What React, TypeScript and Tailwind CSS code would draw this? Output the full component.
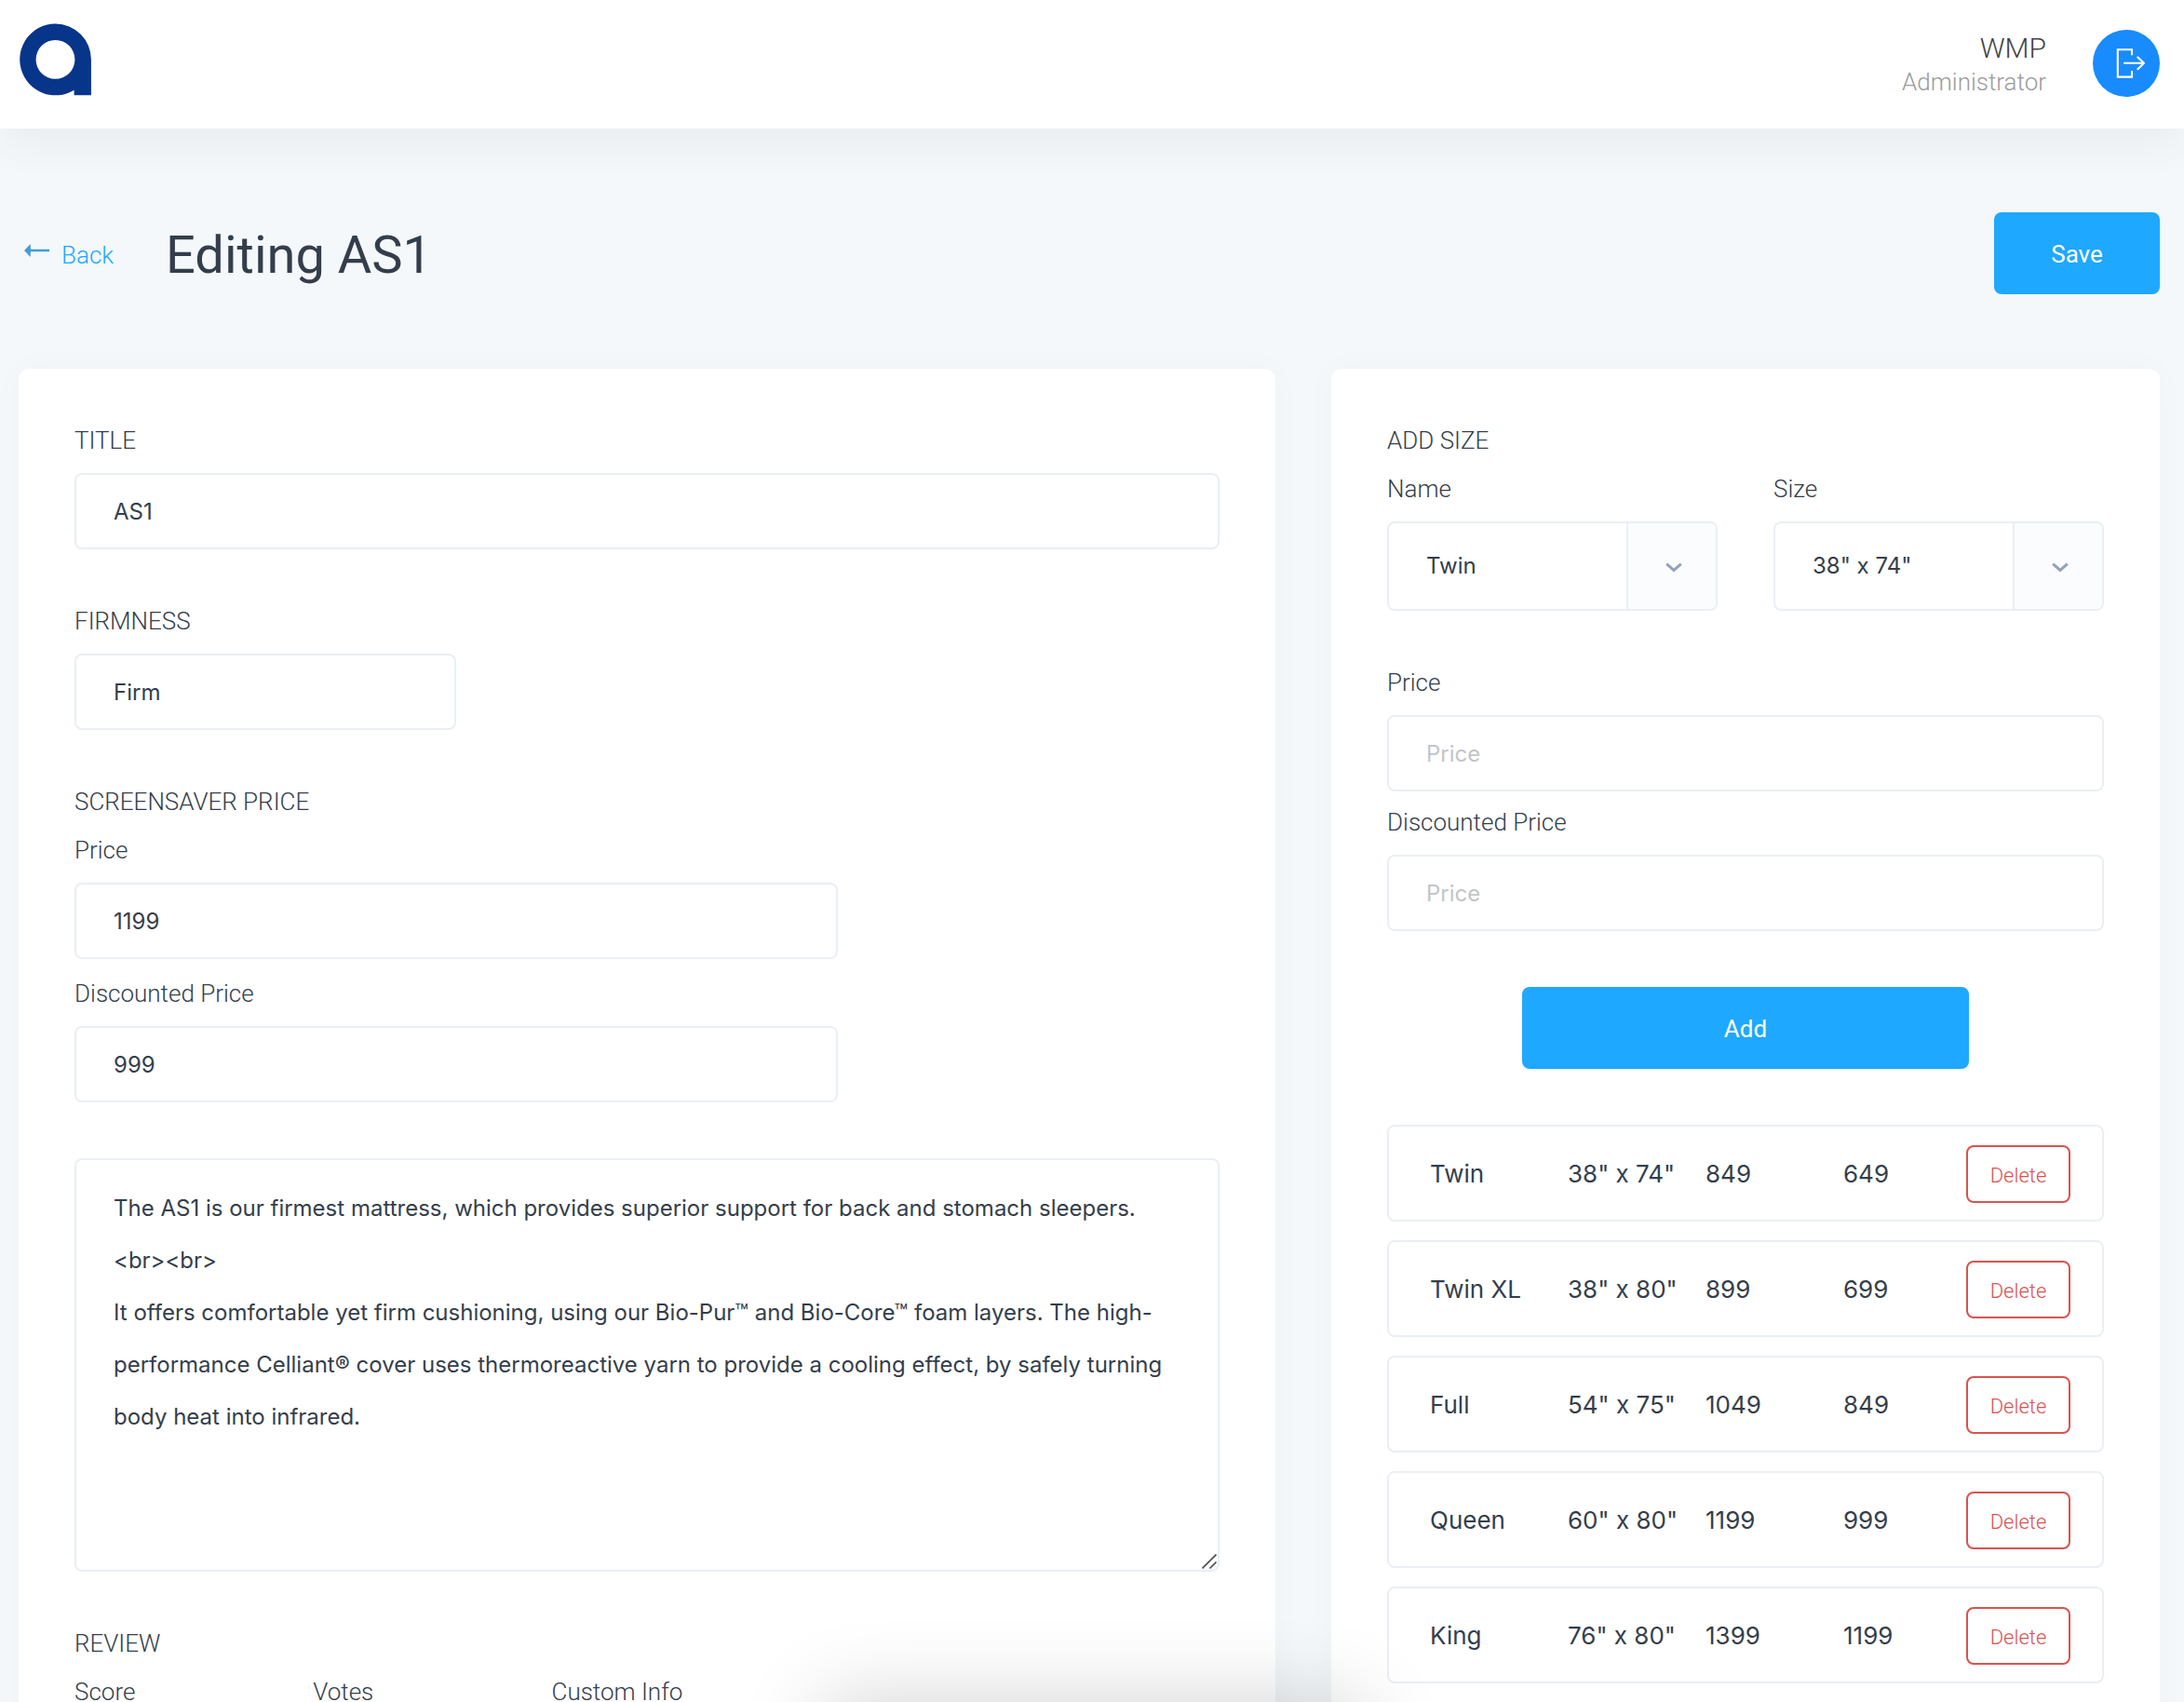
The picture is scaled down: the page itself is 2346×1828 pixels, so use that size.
import { useState } from "react";
import type { ReactNode } from "react";

const sizes = [
  { name: "Twin", size: '38" x 74"', price: "849", discounted: "649" },
  { name: "Twin XL", size: '38" x 80"', price: "899", discounted: "699" },
  { name: "Full", size: '54" x 75"', price: "1049", discounted: "849" },
  { name: "Queen", size: '60" x 80"', price: "1199", discounted: "999" },
  { name: "King", size: '76" x 80"', price: "1399", discounted: "1199" },
];

const description = `The AS1 is our firmest mattress, which provides superior support for back and stomach sleepers.
<br><br>
It offers comfortable yet firm cushioning, using our Bio-Pur™ and Bio-Core™ foam layers. The high-performance Celliant® cover uses thermoreactive yarn to provide a cooling effect, by safely turning body heat into infrared.`;

function Logo() {
  return (
    <svg viewBox="0 0 77 78" className="mb-2.5 h-[78px] w-[77px]" role="img" aria-label="Logo">
      <path
        fill="#07358a"
        fillRule="evenodd"
        d="M38.5 0.5A38.4 38.4 0 0 1 76.9 39V77.3H58.6V71.7A38.4 38.4 0 1 1 38.5 0.5ZM38.5 18A20.9 20.9 0 1 0 38.5 59.8A20.9 20.9 0 1 0 38.5 18Z"
      />
    </svg>
  );
}

function LogoutIcon() {
  return (
    <svg viewBox="0 0 40 40" className="h-10 w-10" fill="none" stroke="#fff" strokeWidth="2.1" strokeLinecap="round" aria-hidden="true">
      <path d="M26 10.5V5.2H10.8V34.6H26V29" />
      <path d="M18 19.8H38.8M32.4 13.4L39 19.8L32.4 26.2" />
    </svg>
  );
}

function BackArrow() {
  return (
    <svg viewBox="0 0 27 14" className="mb-2.5 h-3.5 w-[27px]" aria-hidden="true">
      <path fill="#419bd9" d="M0 7L6.8 0V5.8H27V8.3H6.8V14Z" />
    </svg>
  );
}

function Label({ htmlFor, children }: { htmlFor: string; children: ReactNode }) {
  return (
    <label htmlFor={htmlFor} className="block pt-0.5 text-[26px] leading-[50px] font-light">
      {children}
    </label>
  );
}

function TextInput({ id, value, placeholder }: { id: string; value?: string; placeholder?: string }) {
  return (
    <input
      id={id}
      type="text"
      defaultValue={value}
      placeholder={placeholder}
      className="mt-2.5 block h-[82px] w-full rounded-lg border-2 border-[#e9eff5] bg-white px-10 font-[Inter,sans-serif] text-2xl outline-none placeholder:text-[#c3c5c8]"
    />
  );
}

function SelectInput({ id, options }: { id: string; options: string[] }) {
  const [value, setValue] = useState(options[0]);
  return (
    <div className="relative mt-2.5">
      <select
        id={id}
        value={value}
        onChange={(e) => setValue(e.target.value)}
        className="block h-24 w-full appearance-none rounded-lg border-2 border-[#e9eff5] bg-white pr-28 pl-10 font-[Inter,sans-serif] text-2xl outline-none"
      >
        {options.map((o) => (
          <option key={o}>{o}</option>
        ))}
      </select>
      <span className="pointer-events-none absolute inset-y-0.5 right-0.5 flex w-24 items-center justify-center rounded-r-md border-l-2 border-[#e9eff5] bg-[#fafcfe] pt-0.5 pl-1">
        <svg viewBox="0 0 18 11" className="h-[11px] w-[18px]" fill="none" stroke="#94a3ba" strokeWidth="3" aria-hidden="true">
          <path d="M1.2 1.6L9 8.4L16.8 1.6" />
        </svg>
      </span>
    </div>
  );
}

export default function App() {
  return (
    <div className="relative h-screen overflow-hidden bg-[#f4f8fa] font-[Roboto,sans-serif] text-[#343e4b]">
      <header className="relative flex h-[138px] items-center justify-between bg-white pr-[26px] pl-[21px] shadow-[0_20px_40px_rgba(0,0,0,0.043)]">
        <Logo />
        <div className="flex items-center gap-[50px]">
          <div className="pt-0.5 text-right font-light">
            <p className="text-3xl leading-9 text-[#454545]">WMP</p>
            <p className="text-[26px] leading-9 text-[#9b9b9b]">Administrator</p>
          </div>
          <button type="button" aria-label="Log out" className="mb-0.5 flex h-[72px] w-[72px] items-center justify-center rounded-full bg-[#188bff]">
            <LogoutIcon />
          </button>
        </div>
      </header>

      <main className="pt-[90px] pr-[26px] pl-5">
        <div className="flex items-center justify-between">
          <div className="flex items-center gap-14 pt-1 pl-1.5">
            <a href="#back" className="flex items-center gap-[13px] text-[26px] leading-9 font-light text-[#1fa8ff]">
              <BackArrow />
              Back
            </a>
            <h1 className="text-[56px] leading-[72px]">Editing AS1</h1>
          </div>
          <button type="button" className="h-[88px] w-[178px] rounded-lg bg-[#1fa8ff] pt-0.5 text-[26px] text-white">
            Save
          </button>
        </div>

        <div className="mt-20 grid grid-cols-[135fr_89fr] items-start gap-[60px]">
          <section className="min-h-[1600px] rounded-xl bg-white px-[60px] py-[50px] shadow-[0_0_40px_rgba(0,0,0,0.025)]">
            <div>
              <Label htmlFor="title">TITLE</Label>
              <TextInput id="title" value="AS1" />
            </div>
            <div className="mt-[50px] w-1/3">
              <Label htmlFor="firmness">FIRMNESS</Label>
              <TextInput id="firmness" value="Firm" />
            </div>
            <fieldset className="mt-[50px] w-2/3">
              <legend className="block pt-0.5 text-[26px] leading-[50px] font-light">SCREENSAVER PRICE</legend>
              <Label htmlFor="ss-price">Price</Label>
              <TextInput id="ss-price" value="1199" />
              <div className="mt-2.5">
                <Label htmlFor="ss-discount">Discounted Price</Label>
                <TextInput id="ss-discount" value="999" />
              </div>
            </fieldset>
            <div className="relative mt-[60px]">
              <textarea
                aria-label="Description"
                defaultValue={description}
                className="block h-[444px] w-full resize-none rounded-lg border-2 border-[#e9eff5] bg-white px-10 py-6 font-[Inter,sans-serif] text-2xl leading-[56px] outline-none"
              />
              <svg
                viewBox="0 0 16 16"
                className="pointer-events-none absolute right-[3px] bottom-[3px] h-4 w-4"
                stroke="#4d4d4d"
                strokeWidth="1.6"
                aria-hidden="true"
              >
                <path d="M0.5 15.5L15.5 0.5M8.5 15.5L15.5 8.5" />
              </svg>
            </div>
            <fieldset className="mt-[50px]">
              <legend className="block pt-0.5 text-[26px] leading-[50px] font-light">REVIEW</legend>
              <div className="grid grid-cols-[5fr_5fr_14fr]">
                <div className="pr-10">
                  <Label htmlFor="score">Score</Label>
                  <TextInput id="score" />
                </div>
                <div className="pr-10">
                  <Label htmlFor="votes">Votes</Label>
                  <TextInput id="votes" />
                </div>
                <div>
                  <Label htmlFor="custom-info">Custom Info</Label>
                  <TextInput id="custom-info" />
                </div>
              </div>
            </fieldset>
          </section>

          <section className="min-h-[1600px] rounded-xl bg-white px-[60px] py-[50px] shadow-[0_0_40px_rgba(0,0,0,0.025)]">
            <h2 className="pt-0.5 text-[26px] leading-[50px] font-light">ADD SIZE</h2>
            <div className="grid grid-cols-2 gap-[60px]">
              <div>
                <Label htmlFor="size-name">Name</Label>
                <SelectInput id="size-name" options={sizes.map((s) => s.name)} />
              </div>
              <div>
                <Label htmlFor="size-size">Size</Label>
                <SelectInput id="size-size" options={sizes.map((s) => s.size)} />
              </div>
            </div>
            <div className="mt-[50px]">
              <Label htmlFor="size-price">Price</Label>
              <TextInput id="size-price" placeholder="Price" />
            </div>
            <div className="mt-1.5">
              <Label htmlFor="size-discount">Discounted Price</Label>
              <TextInput id="size-discount" placeholder="Price" />
            </div>
            <button type="button" className="mx-auto mt-[60px] block h-[88px] w-[480px] rounded-lg bg-[#1fa8ff] pt-0.5 text-[26px] text-white">
              Add
            </button>
            <table className="mt-[60px] block font-[Inter,sans-serif] text-[26px]">
              <tbody className="flex flex-col gap-5">
                {sizes.map((s) => (
                  <tr
                    key={s.name}
                    className="grid h-[104px] grid-cols-[148fr_148fr_148fr_132fr_auto] items-center rounded-lg border-2 border-[#e9eff5] pr-[34px] pl-11 whitespace-nowrap"
                  >
                    <td>{s.name}</td>
                    <td>{s.size}</td>
                    <td>{s.price}</td>
                    <td>{s.discounted}</td>
                    <td className="pt-0.5">
                      <button
                        type="button"
                        aria-label={`Delete ${s.name}`}
                        className="block h-[62px] w-28 rounded-lg border-2 border-[#d9534f] pt-0.5 font-[Roboto,sans-serif] text-[22px] font-light text-[#d9534f]"
                      >
                        Delete
                      </button>
                    </td>
                  </tr>
                ))}
              </tbody>
            </table>
          </section>
        </div>
      </main>

      <div className="pointer-events-none absolute inset-x-0 top-full flex justify-center">
        <div className="h-40 w-[580px] rounded-xl shadow-[0_0_90px_rgba(0,0,0,0.18)]" />
      </div>
    </div>
  );
}
